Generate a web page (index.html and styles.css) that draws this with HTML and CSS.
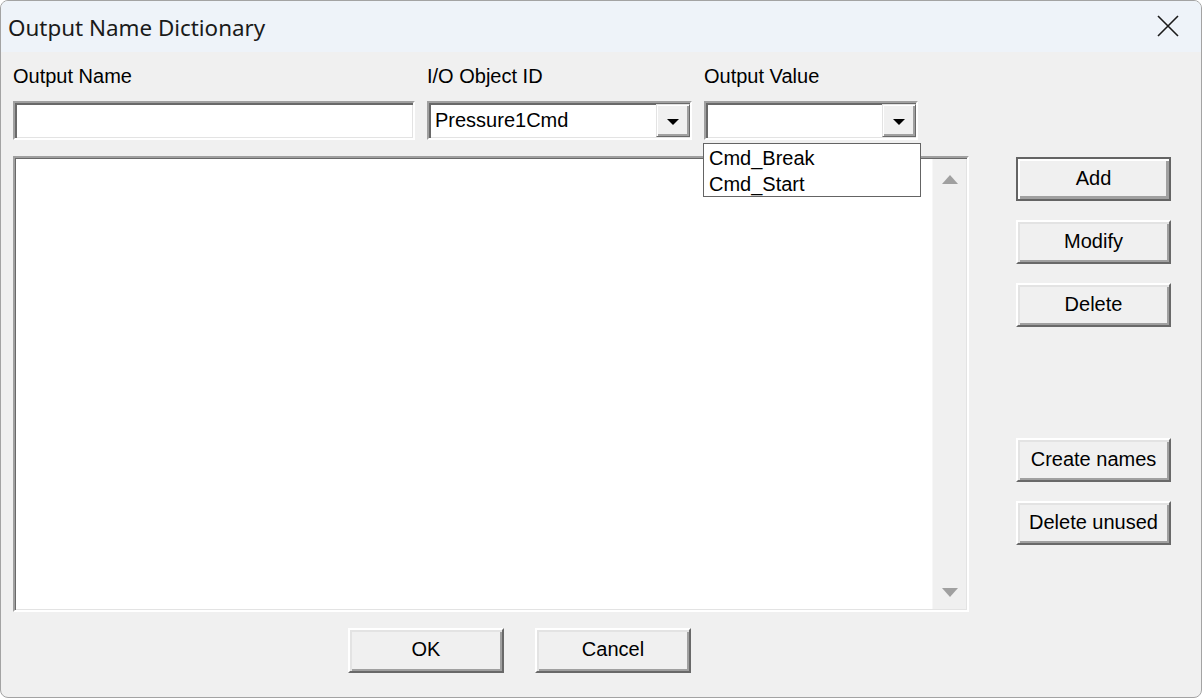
FILE: index.html
```html
<!DOCTYPE html>
<html lang="en">
<head>
  <meta charset="UTF-8" />
  <title>Output Name Dictionary</title>
  <link rel="stylesheet" href="styles.css">
</head>
<body>
  <div class="window">
    <div class="titlebar">
      <span class="title">Output Name Dictionary</span>
      <svg class="close" width="22" height="22" viewBox="0 0 22 22">
        <path d="M1 1 L21 21 M21 1 L1 21" stroke="#1a1a1a" stroke-width="1.6" fill="none"/>
      </svg>
    </div>

    <div class="client">
      <div class="main-col">
        <div class="fields">
          <div class="field-cell">
            <div class="label">Output Name</div>
            <div class="edit"></div>
          </div>
          <div class="field-cell">
            <div class="label">I/O Object ID</div>
            <div class="edit combo">
              <span class="combo-text">Pressure1Cmd</span>
              <span class="combo-btn"><span class="tri-down"></span></span>
            </div>
          </div>
          <div class="field-cell">
            <div class="label">Output Value</div>
            <div class="edit combo">
              <span class="combo-text"></span>
              <span class="combo-btn"><span class="tri-down"></span></span>
            </div>
            <div class="dropdown">
              <div class="dropdown-item">Cmd_Break</div>
              <div class="dropdown-item">Cmd_Start</div>
            </div>
          </div>
        </div>

        <div class="listbox">
          <div class="list-content"></div>
          <div class="scrollbar">
            <span class="arrow-up"></span>
            <span class="arrow-down"></span>
          </div>
        </div>

        <div class="bottom-buttons">
          <button class="btn">OK</button>
          <button class="btn">Cancel</button>
        </div>
      </div>

      <div class="side-col">
        <button class="btn default">Add</button>
        <button class="btn">Modify</button>
        <button class="btn">Delete</button>
        <button class="btn spaced">Create names</button>
        <button class="btn">Delete unused</button>
      </div>
    </div>
  </div>
</body>
</html>
```

FILE: styles.css
```css
body {
  margin: 0;
  background: #ffffff;
  font-family: 'Liberation Sans', Arial, sans-serif;
}
.window {
  width: 1202px;
  height: 698px;
  box-sizing: border-box;
  border: 1px solid #a3a3a3;
  border-radius: 8px;
  overflow: hidden;
  background: #f0f0f0;
}
.titlebar {
  height: 51px;
  background: #eef3f9;
  display: flex;
  align-items: center;
  justify-content: space-between;
  padding: 0 22px 0 7px;
}
.title {
  font-family: 'Noto Sans', sans-serif;
  font-size: 22.4px;
  color: #1a1a1a;
  margin-top: 1px;
}
.close {
  margin-top: -2px;
}
.client {
  display: flex;
  padding: 12px 12px 0 12px;
  color: #000;
  font-size: 20px;
}
.main-col {
  width: 956px;
}
.fields {
  display: grid;
  grid-template-columns: 402px 265px 214px;
  column-gap: 12px;
}
.field-cell {
  position: relative;
}
.label {
  height: 24px;
  line-height: 24px;
  margin-bottom: 13px;
}
.edit {
  height: 39px;
  box-sizing: border-box;
  background: #fff;
  border-style: solid;
  border-width: 2px;
  border-color: #a0a0a0 #ffffff #ffffff #a0a0a0;
  box-shadow: inset 2px 2px 0 #696969, inset -1px -1px 0 #e3e3e3;
}
.combo {
  display: flex;
  align-items: center;
  justify-content: space-between;
  padding: 1px 0 1px 6px;
}
.combo-text {
  line-height: 33px;
}
.combo-btn {
  width: 34px;
  height: 33px;
  box-sizing: border-box;
  background: #f0f0f0;
  border-style: solid;
  border-width: 1px;
  border-color: #e3e3e3 #696969 #696969 #e3e3e3;
  box-shadow: inset 1px 1px 0 #fff, inset -2px -2px 0 #a0a0a0;
  display: flex;
  align-items: center;
  justify-content: center;
}
.tri-down {
  width: 0;
  height: 0;
  border-left: 6px solid transparent;
  border-right: 6px solid transparent;
  border-top: 6px solid #000;
  margin-top: 2px;
}
.dropdown {
  position: absolute;
  left: -1px;
  top: 79px;
  width: 218px;
  height: 54px;
  box-sizing: border-box;
  border: 1px solid #646464;
  background: #fff;
  padding-top: 1px;
  z-index: 2;
}
.dropdown-item {
  height: 26px;
  line-height: 26px;
  padding-left: 5px;
}
.listbox {
  margin-top: 16px;
  height: 456px;
  box-sizing: border-box;
  display: flex;
  border-style: solid;
  border-width: 2px;
  border-color: #a0a0a0 #ffffff #ffffff #a0a0a0;
  box-shadow: inset 1px 1px 0 #696969, inset -1px -1px 0 #e3e3e3;
  background: #fff;
  padding: 1px;
}
.list-content {
  flex: 1;
  background: #fff;
}
.scrollbar {
  width: 33px;
  background: #f0f0f0;
  border-left: 1px solid #f7f7f7;
  display: flex;
  flex-direction: column;
  justify-content: space-between;
  align-items: center;
  padding: 16px 0 12px;
}
.arrow-up {
  width: 0;
  height: 0;
  border-left: 8px solid transparent;
  border-right: 8px solid transparent;
  border-bottom: 9px solid #a0a0a0;
}
.arrow-down {
  width: 0;
  height: 0;
  border-left: 8px solid transparent;
  border-right: 8px solid transparent;
  border-top: 9px solid #a0a0a0;
}
.bottom-buttons {
  display: flex;
  gap: 31px;
  margin-top: 16px;
  padding-left: 335px;
}
.btn {
  width: 155px;
  height: 44px;
  box-sizing: border-box;
  background: #f0f0f0;
  font-family: 'Liberation Sans', Arial, sans-serif;
  font-size: 20px;
  color: #000;
  border-style: solid;
  border-width: 2px;
  border-color: #ffffff #696969 #696969 #ffffff;
  box-shadow: inset 2px 2px 0 #e3e3e3, inset -2px -2px 0 #a0a0a0;
  padding: 0 0 2px;
}
.bottom-buttons .btn {
  width: 156px;
  height: 45px;
}
.btn.default {
  border: 2px solid #646464;
  box-shadow: inset 2px 2px 0 #ffffff, inset -3px -3px 0 #a0a0a0;
}
.side-col {
  margin-left: 47px;
  margin-top: 93px;
  display: flex;
  flex-direction: column;
  gap: 19px;
}
.side-col .spaced {
  margin-top: 92px;
}
```
